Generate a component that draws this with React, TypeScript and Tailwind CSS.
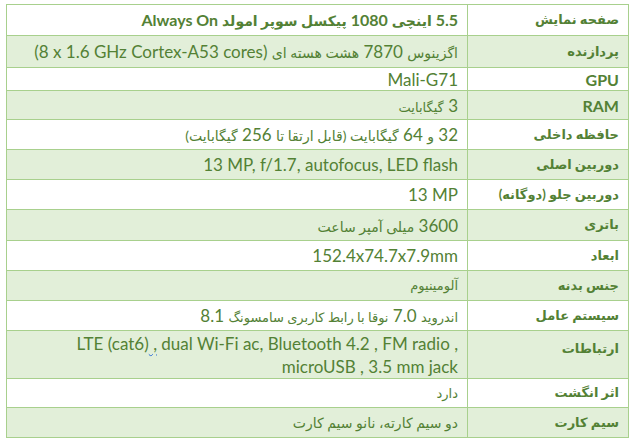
import React from "react"

type Row = {
    label: string
    latinLabel?: boolean
    top?: boolean
    value: React.ReactNode
    h: string
    shaded: boolean
}

const fa = "text-[14px]"

// Latin runs inside the RTL table keep their own direction
const L = ({ children }: { children: React.ReactNode }) => <bdi dir="ltr">{children}</bdi>

const rows: Row[] = [
    {
        label: "صفحه نمایش",
        value: (
            <span className="font-bold text-[16px]">
                5.5 <span className="text-[14px]">اینچی</span> 1080 <span className="text-[14px]">پیکسل سوپر امولد</span> <L>Always On</L>
            </span>
        ),
        h: "h-[30px]",
        shaded: false,
    },
    {
        label: "پردازنده",
        value: (
            <span>
                <span className={fa}>اگزینوس</span> 7870 <span className={fa}>هشت هسته ای</span> <L>(8 x 1.6 GHz Cortex-A53 cores)</L>
            </span>
        ),
        h: "h-[32px]",
        shaded: true,
    },
    { label: "GPU", latinLabel: true, value: <L>Mali-G71</L>, h: "h-[23px]", shaded: false },
    {
        label: "RAM",
        latinLabel: true,
        value: (
            <span>
                3 <span className="text-[13px]">گیگابایت</span>
            </span>
        ),
        h: "h-[29px]",
        shaded: true,
    },
    {
        label: "حافظه داخلی",
        value: (
            <span>
                32 <span className={fa}>و</span> 64 <span className={fa}>گیگابایت (قابل ارتقا تا</span> 256 <span className={fa}>گیگابایت)</span>
            </span>
        ),
        h: "h-[30px]",
        shaded: false,
    },
    { label: "دوربین اصلی", value: <L>13 MP, f/1.7, autofocus, LED flash</L>, h: "h-[30px]", shaded: true },
    { label: "دوربین جلو (دوگانه)", value: <L>13 MP</L>, h: "h-[30px]", shaded: false },
    {
        label: "باتری",
        value: (
            <span>
                3600 <span className={fa}>میلی آمپر ساعت</span>
            </span>
        ),
        h: "h-[31px]",
        shaded: true,
    },
    { label: "ابعاد", value: <L>152.4x74.7x7.9mm</L>, h: "h-[30px]", shaded: false },
    {
        label: "جنس بدنه",
        value: <span className="text-[13px]">آلومینیوم</span>,
        h: "h-[30px]",
        shaded: true,
    },
    {
        label: "سیستم عامل",
        value: (
            <span>
                <span className="text-[13px]">اندروید</span> 7.0 <span className="text-[13px]">نوقا با رابط کاربری سامسونگ</span> 8.1
            </span>
        ),
        h: "h-[30px]",
        shaded: false,
    },
    {
        label: "ارتباطات",
        top: true,
        value: (
            <div className="flex flex-col items-start leading-[23px]">
                <span dir="ltr">
                    LTE (cat6)<span className="underline decoration-wavy decoration-[#2b6cd8] decoration-1 underline-offset-2">&nbsp;,</span> dual Wi-Fi ac, Bluetooth 4.2 , FM radio ,
                </span>
                <span dir="ltr">microUSB , 3.5 mm jack</span>
            </div>
        ),
        h: "h-[48px]",
        shaded: true,
    },
    {
        label: "اثر انگشت",
        value: <span className="text-[13px]">دارد</span>,
        h: "h-[29px]",
        shaded: false,
    },
    {
        label: "سیم کارت",
        value: <span className="text-[14px]">دو سیم کارته، نانو سیم کارت</span>,
        h: "h-[30px]",
        shaded: true,
    },
]

export default function App() {
    return (
        <div
            className="w-[639px] h-[443px] bg-white pt-[4px] pl-[6px]"
            style={{ fontFamily: "Lato, 'DejaVu Sans', sans-serif" }}
        >
            <div dir="rtl" className="w-[623px] border border-[#a8d08d] text-[#538135]">
                {rows.map((row, i) => (
                    <div
                        key={i}
                        className={`flex ${row.h} ${i > 0 ? "border-t border-[#a8d08d]" : ""} ${row.shaded ? "bg-[#e2efd9]" : "bg-white"}`}
                    >
                        <div
                            className={`w-[161px] shrink-0 flex px-[9px] font-bold border-l border-[#a8d08d] ${row.top ? "items-start pt-[8px]" : "items-center"} ${row.latinLabel ? "text-[16px] pt-[1px]" : "text-[13px]"}`}
                        >
                            {row.label}
                        </div>
                        <div className="flex-1 flex items-center px-[9px] text-[17px] leading-none whitespace-nowrap">
                            {row.value}
                        </div>
                    </div>
                ))}
            </div>
        </div>
    )
}
